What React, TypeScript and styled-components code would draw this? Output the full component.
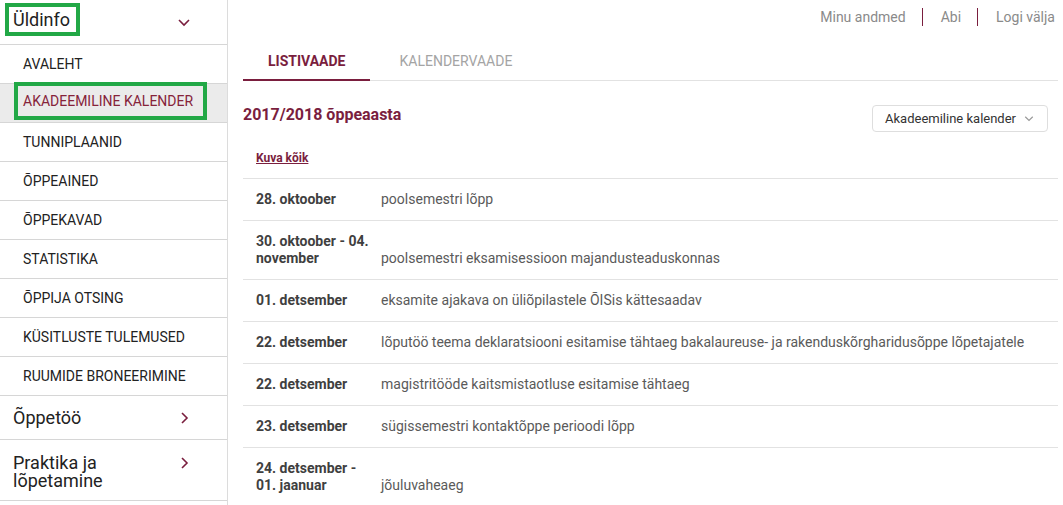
import React from "react";
import styled, { createGlobalStyle } from "styled-components";

const GlobalStyle = createGlobalStyle`
  html, body { margin: 0; padding: 0; background: #fff; }
  body { font-family: Roboto, "Noto Sans", "Liberation Sans", sans-serif; }
  * { box-sizing: border-box; }
`;

const BRAND = "#7a1e3e";
const GREEN = "#22a846";

const Page = styled.div`
  display: flex;
  min-height: 505px;
  width: 1063px;
  overflow: hidden;
`;

const Sidebar = styled.nav`
  width: 228px;
  flex: 0 0 228px;
  border-right: 1px solid #dcdcdc;
  display: flex;
  flex-direction: column;
`;

const GroupHeader = styled.div<{ $tall?: boolean }>`
  display: flex;
  align-items: flex-start;
  justify-content: space-between;
  padding: ${(p) => (p.$tall ? "14px 38px 10px 13px" : "0 38px 0 13px")};
  min-height: 44px;
  border-bottom: 1px solid #d6d6d6;
  font-size: 18px;
  line-height: 18px;
  color: #222;
`;

const OpenHeader = styled(GroupHeader)`
  padding-top: 3px;
  padding-right: 37px;
  height: 45px;
`;

const GroupLabel = styled.span<{ $center?: boolean }>`
  width: 150px;
  ${(p) => (p.$center ? "align-self: center;" : "")}
`;

const BoxedTitle = styled.span`
  display: inline-block;
  margin-left: -8px;
  padding: 0 6px 0 4px;
  border: 4px solid ${GREEN};
  line-height: 25px;
  font-size: 18px;
  color: #222;
`;

const DownChevron = styled.svg`
  width: 12px;
  height: 8px;
  margin-top: 16px;
`;

const RightChevron = styled.svg<{ $center?: boolean }>`
  width: 8px;
  height: 12px;
  ${(p) => (p.$center ? "align-self: center;" : "margin-top: 3px;")}
`;

const SubItem = styled.div<{ $active?: boolean }>`
  height: 39px;
  display: flex;
  align-items: center;
  padding-left: 23px;
  border-bottom: 1px solid #d6d6d6;
  font-size: 14px;
  text-transform: uppercase;
  color: ${(p) => (p.$active ? "#86233a" : "#222")};
  background: ${(p) => (p.$active ? "#ebebeb" : "#fff")};
`;

const BoxedItem = styled.span`
  display: inline-flex;
  align-items: center;
  height: 38px;
  margin-left: -9px;
  margin-bottom: 4px;
  padding: 0 10px 0 5px;
  border: 4px solid ${GREEN};
`;

const Main = styled.main`
  flex: 1;
  padding: 0 5px 0 15px;
  display: flex;
  flex-direction: column;
`;

const TopLinks = styled.div`
  height: 42px;
  display: flex;
  justify-content: flex-end;
  align-items: flex-start;
  padding: 8px 3px 0 0;
`;

const TopLink = styled.a`
  font-size: 14px;
  line-height: 18px;
  color: #8a8a8a;
  text-decoration: none;
  padding: 0 16px 0 18px;
  & + & {
    border-left: 1px solid ${BRAND};
  }
  &:first-child { padding-left: 0; }
  &:last-child { padding-right: 0; }
`;

const Tabs = styled.div`
  display: flex;
  border-bottom: 1px solid #e2e2e2;
`;

const Tab = styled.div<{ $active?: boolean }>`
  height: 39px;
  padding: 0 25px;
  margin-right: 4px;
  display: flex;
  align-items: center;
  font-size: 14px;
  text-transform: uppercase;
  font-weight: ${(p) => (p.$active ? 700 : 400)};
  color: ${(p) => (p.$active ? BRAND : "#a4a4a4")};
  border-bottom: 2px solid ${(p) => (p.$active ? BRAND : "transparent")};
  margin-bottom: -1px;
`;

const HeadingRow = styled.div`
  display: flex;
  justify-content: space-between;
  align-items: flex-start;
  padding: 24px 10px 0 0;
`;

const Heading = styled.h2`
  margin: 0;
  font-size: 16px;
  line-height: 20px;
  font-weight: 700;
  color: ${BRAND};
`;

const Select = styled.div`
  height: 27px;
  display: flex;
  align-items: center;
  gap: 8px;
  padding: 0 13px 0 12px;
  border: 1px solid #dedede;
  border-radius: 4px;
  font-size: 13px;
  color: #333;
`;

const SelectChevron = styled.svg`
  width: 10px;
  height: 6px;
  margin-top: 1px;
`;

const ShowAll = styled.a`
  display: block;
  margin: 18px 0 12px 13px;
  font-size: 12px;
  line-height: 16px;
  font-weight: 700;
  color: ${BRAND};
  text-decoration: underline;
`;

const Table = styled.div`
  border-top: 1px solid #e2e2e2;
`;

const Row = styled.div`
  display: flex;
  align-items: flex-end;
  padding: 12px 13px 12px 13px;
  border-bottom: 1px solid #e2e2e2;
  font-size: 14px;
  line-height: 17px;
`;

const DateCell = styled.div`
  width: 125px;
  flex: 0 0 125px;
  padding-right: 12px;
  font-weight: 700;
  color: #3f3f3f;
`;

const Desc = styled.div`
  color: #5a5a5a;
`;

const Down = ({ color }: { color: string }) => (
  <polyline points="1,1 6,6 11,1" fill="none" stroke={color} strokeWidth="1.6" />
);

const ChevronRight = ({ center }: { center?: boolean }) => (
  <RightChevron $center={center} viewBox="0 0 8 12">
    <polyline points="1,1 6,6 1,11" fill="none" stroke={BRAND} strokeWidth="1.6" />
  </RightChevron>
);

const subItems = [
  "Avaleht",
  "Akadeemiline kalender",
  "Tunniplaanid",
  "Õppeained",
  "Õppekavad",
  "Statistika",
  "Õppija otsing",
  "Küsitluste tulemused",
  "Ruumide broneerimine",
];

const events: [string, string][] = [
  ["28. oktoober", "poolsemestri lõpp"],
  ["30. oktoober - 04. november", "poolsemestri eksamisessioon majandusteaduskonnas"],
  ["01. detsember", "eksamite ajakava on üliõpilastele ÕISis kättesaadav"],
  ["22. detsember", "lõputöö teema deklaratsiooni esitamise tähtaeg bakalaureuse- ja rakenduskõrgharidusõppe lõpetajatele"],
  ["22. detsember", "magistritööde kaitsmistaotluse esitamise tähtaeg"],
  ["23. detsember", "sügissemestri kontaktõppe perioodi lõpp"],
  ["24. detsember - 01. jaanuar", "jõuluvaheaeg"],
];

export default function App() {
  return (
    <>
      <GlobalStyle />
      <Page>
        <Sidebar>
          <OpenHeader>
            <BoxedTitle>Üldinfo</BoxedTitle>
            <DownChevron viewBox="0 0 12 8">
              <Down color={BRAND} />
            </DownChevron>
          </OpenHeader>
          {subItems.map((s, i) =>
            i === 1 ? (
              <SubItem key={s} $active>
                <BoxedItem>{s}</BoxedItem>
              </SubItem>
            ) : (
              <SubItem key={s}>{s}</SubItem>
            )
          )}
          <GroupHeader>
            <GroupLabel $center>Õppetöö</GroupLabel>
            <ChevronRight center />
          </GroupHeader>
          <GroupHeader $tall>
            <GroupLabel>Praktika ja lõpetamine</GroupLabel>
            <ChevronRight />
          </GroupHeader>
        </Sidebar>
        <Main>
          <TopLinks>
            <TopLink>Minu andmed</TopLink>
            <TopLink>Abi</TopLink>
            <TopLink>Logi välja</TopLink>
          </TopLinks>
          <Tabs>
            <Tab $active>Listivaade</Tab>
            <Tab>Kalendervaade</Tab>
          </Tabs>
          <HeadingRow>
            <Heading>2017/2018 õppeaasta</Heading>
            <Select>
              Akadeemiline kalender
              <SelectChevron viewBox="0 0 12 8">
                <Down color="#9a9a9a" />
              </SelectChevron>
            </Select>
          </HeadingRow>
          <ShowAll>Kuva kõik</ShowAll>
          <Table>
            {events.map(([d, t], i) => (
              <Row key={i}>
                <DateCell>{d}</DateCell>
                <Desc>{t}</Desc>
              </Row>
            ))}
          </Table>
        </Main>
      </Page>
    </>
  );
}
